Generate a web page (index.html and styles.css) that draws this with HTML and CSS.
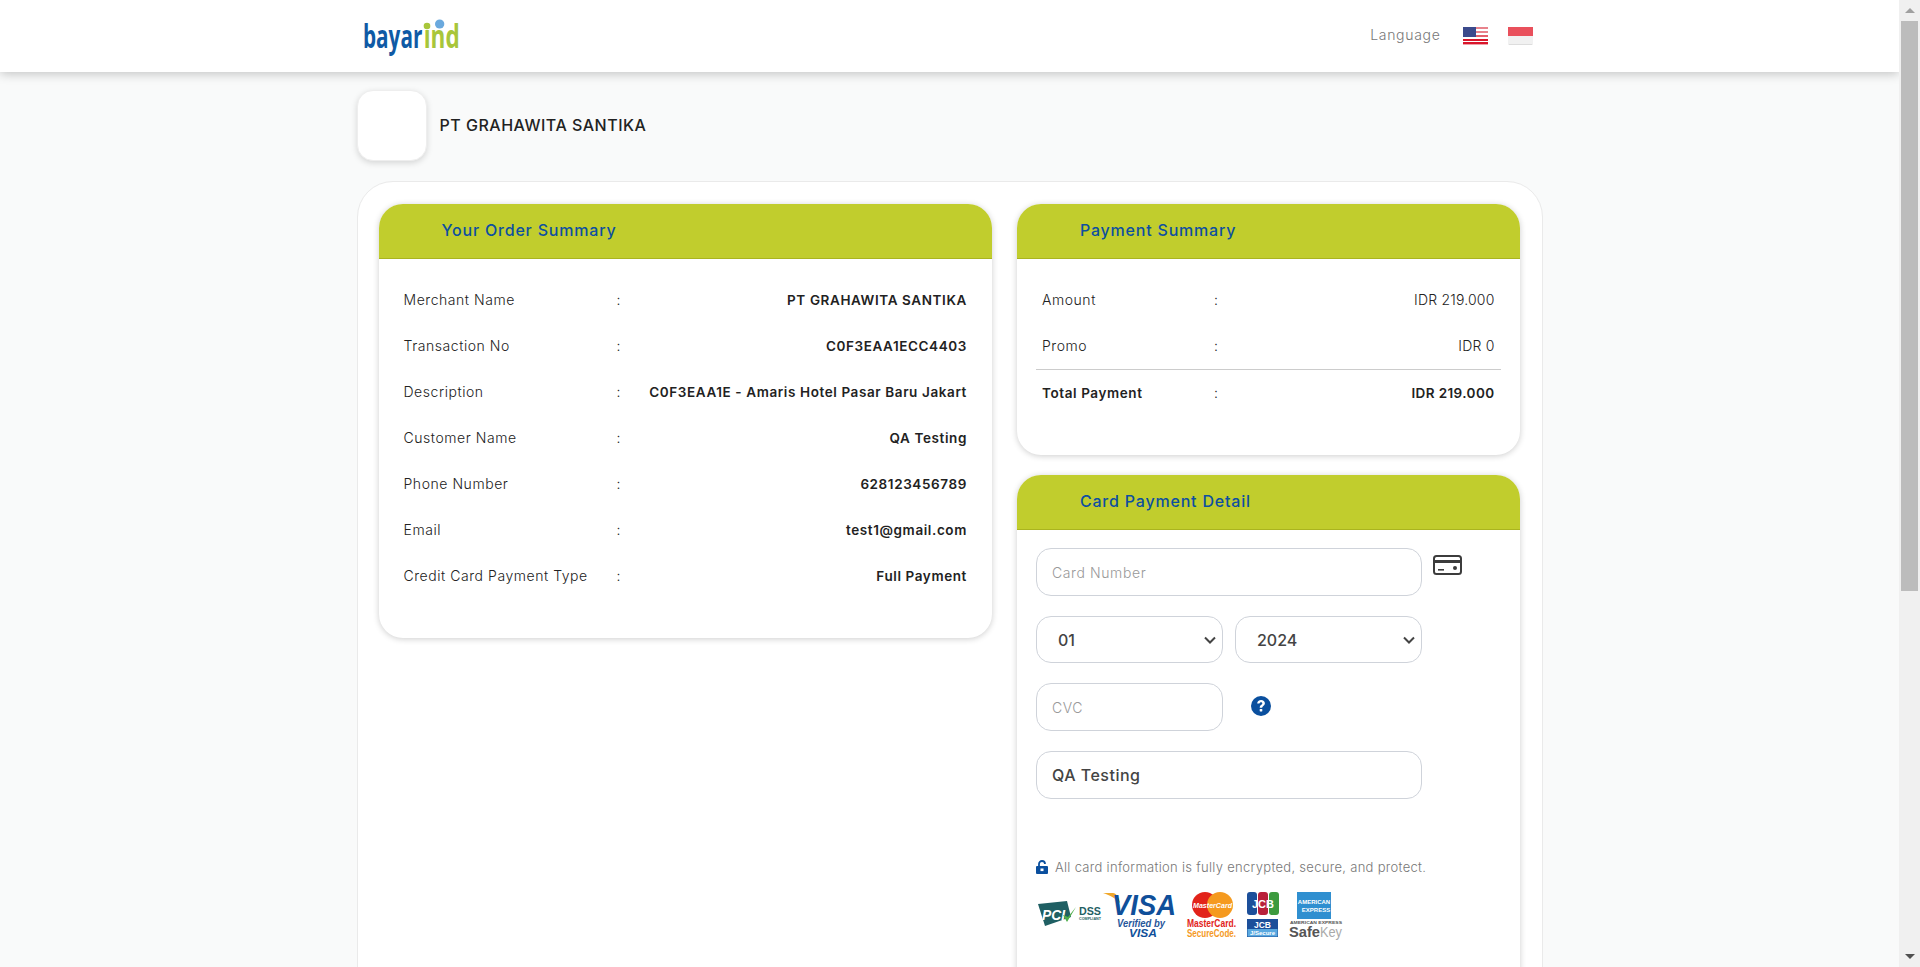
FILE: index.html
```html
<!doctype html>
<html>
<head>
<meta charset="utf-8">
<title>Bayarind Payment</title>
<link rel="stylesheet" href="styles.css">
</head>

<body>
<div class="page">
    <div class="topbar">
        <div class="wrap topbar-in">
            <svg class="logo" width="100" height="36" viewBox="0 0 150 36" preserveAspectRatio="none">
                <text x="0" y="29" class="logo-txt logo-blue" textLength="89" lengthAdjust="spacingAndGlyphs">bayar</text>
                <text x="91" y="29" class="logo-txt logo-green" textLength="54" lengthAdjust="spacingAndGlyphs">ind</text>
                <ellipse cx="96" cy="7" rx="5" ry="3.2" fill="#a8c63a"/>
                <ellipse cx="115" cy="5" rx="7" ry="4.6" fill="#6aa9de"/>
            </svg>
            <div class="lang">
                <span class="lang-label">Language</span>
                <svg class="flag" width="25" height="18" viewBox="0 0 25 18">
                    <rect width="25" height="18" fill="#fff"/>
                    <rect y="0" width="25" height="2" fill="#e8838c"/>
                    <rect y="4" width="25" height="2" fill="#e8838c"/>
                    <rect y="8" width="25" height="2" fill="#e4606b"/>
                    <rect y="12" width="25" height="2" fill="#d9152a"/>
                    <rect y="15" width="25" height="2.4" fill="#d9152a"/>
                    <rect width="13" height="10" fill="#3b4a8c"/>
                </svg>
                <svg class="flag" width="25" height="18" viewBox="0 0 25 18">
                    <rect width="25" height="18" fill="#f1f1f1"/>
                    <rect x="1" y="17" width="23" height="1" fill="#ddd"/>
                    <rect width="25" height="9" fill="#e9505c"/>
                </svg>
            </div>
        </div>
    </div>

    <div class="wrap">
        <div class="merchant">
            <div class="merchant-logo"></div>
            <div class="merchant-name">PT GRAHAWITA SANTIKA</div>
        </div>

        <div class="main">
            <div class="col-left">
                <div class="card">
                    <div class="card-head">Your Order Summary</div>
                    <div class="card-body">
                        <div class="row order"><span class="lbl">Merchant Name</span><span class="sep">:</span><span class="val b">PT GRAHAWITA SANTIKA</span></div>
                        <div class="row order"><span class="lbl">Transaction No</span><span class="sep">:</span><span class="val b">C0F3EAA1ECC4403</span></div>
                        <div class="row order"><span class="lbl">Description</span><span class="sep">:</span><span class="val b">C0F3EAA1E - Amaris Hotel Pasar Baru Jakart</span></div>
                        <div class="row order"><span class="lbl">Customer Name</span><span class="sep">:</span><span class="val b">QA Testing</span></div>
                        <div class="row order"><span class="lbl">Phone Number</span><span class="sep">:</span><span class="val b">628123456789</span></div>
                        <div class="row order"><span class="lbl">Email</span><span class="sep">:</span><span class="val b">test1@gmail.com</span></div>
                        <div class="row order"><span class="lbl">Credit Card Payment Type</span><span class="sep">:</span><span class="val b">Full Payment</span></div>
                    </div>
                </div>
            </div>

            <div class="col-right">
                <div class="card">
                    <div class="card-head">Payment Summary</div>
                    <div class="card-body">
                        <div class="row pay"><span class="lbl">Amount</span><span class="sep">:</span><span class="val">IDR 219.000</span></div>
                        <div class="row pay"><span class="lbl">Promo</span><span class="sep">:</span><span class="val">IDR 0</span></div>
                        <div class="row pay total"><span class="lbl b">Total Payment</span><span class="sep">:</span><span class="val b">IDR 219.000</span></div>
                    </div>
                </div>

                <div class="card">
                    <div class="card-head">Card Payment Detail</div>
                    <div class="card-form">
                        <div class="form-row">
                            <input class="field wide" type="text" placeholder="Card Number">
                            <svg class="card-ico" width="29" height="20" viewBox="0 0 29 20">
                                <rect x="1" y="1" width="27" height="18" rx="2.5" fill="none" stroke="#3c3c3c" stroke-width="2"/>
                                <rect x="1" y="5" width="27" height="3" fill="#3c3c3c"/>
                                <rect x="5" y="14" width="6" height="1.6" fill="#3c3c3c"/>
                                <circle cx="22" cy="13" r="2" fill="#3c3c3c"/>
                            </svg>
                        </div>
                        <div class="form-row pair">
                            <select class="field half sel"><option>01</option></select>
                            <select class="field half sel"><option>2024</option></select>
                        </div>
                        <div class="form-row">
                            <input class="field half" type="text" placeholder="CVC">
                            <svg class="help-ico" width="20" height="20" viewBox="0 0 20 20">
                                <circle cx="10" cy="10" r="10" fill="#0a4f9e"/>
                                <path d="M6.2 7.5c0-2.2 1.7-3.5 3.9-3.5s3.8 1.3 3.8 3.2c0 2.6-2.7 2.6-2.7 4.6H8.7c0-3.1 2.6-3 2.6-4.4 0-.7-.5-1.2-1.3-1.2-.9 0-1.4.6-1.5 1.4z" fill="#fff"/>
                                <rect x="8.7" y="12.9" width="2.6" height="2.6" rx=".4" fill="#fff"/>
                            </svg>
                        </div>
                        <div class="form-row">
                            <input class="field wide filled" type="text" value="QA Testing">
                        </div>

                        <div class="secure">
                            <svg width="12" height="14" viewBox="0 0 12 14">
                                <path d="M3 6V4a3 3 0 0 1 6 0" fill="none" stroke="#0a4f9e" stroke-width="1.8"/>
                                <rect y="6" width="12" height="8" rx="1" fill="#0a4f9e"/>
                                <rect x="4.5" y="8.5" width="3" height="2.6" fill="#fff"/>
                            </svg>
                            <span>All card information is fully encrypted, secure, and protect.</span>
                        </div>

                        <div class="badges">
                            <svg width="64" height="46" viewBox="0 0 64 46">
                                <path d="M0 12l29-3 4 16-26 9z" fill="#1f5f63"/>
                                <text x="4" y="28" class="b-pci" textLength="23" lengthAdjust="spacingAndGlyphs">PCI</text>
                                <path d="M25 23l4 7 9-15-8 10z" fill="#4fae4a"/>
                                <text x="41" y="23" class="b-dss" textLength="22" lengthAdjust="spacingAndGlyphs">DSS</text>
                                <text x="41" y="28" class="b-comp" textLength="22" lengthAdjust="spacingAndGlyphs">COMPLIANT</text>
                            </svg>
                            <svg width="74" height="50" viewBox="0 0 74 50">
                                <path d="M0 1h10c3 0 6 5 7 10C13 6 6 3 0 1z" fill="#f0a72a"/>
                                <text x="9" y="23" class="b-visa" textLength="64" lengthAdjust="spacingAndGlyphs">VISA</text>
                                <text x="14" y="34.5" class="b-ver" textLength="48" lengthAdjust="spacingAndGlyphs">Verified by</text>
                                <text x="26" y="44.5" class="b-visa2" textLength="28" lengthAdjust="spacingAndGlyphs">VISA</text>
                            </svg>
                            <svg class="badge-mc" width="50" height="48" viewBox="0 0 50 48">
                                <circle cx="18" cy="13" r="13" fill="#e2231a"/>
                                <circle cx="33" cy="13" r="13" fill="#f59a1f"/>
                                <text x="6" y="15.5" class="b-mc" textLength="39" lengthAdjust="spacingAndGlyphs">MasterCard</text>
                                <text x="0" y="35" class="b-mc1" textLength="49" lengthAdjust="spacingAndGlyphs">MasterCard.</text>
                                <text x="0" y="45" class="b-mc2" textLength="49" lengthAdjust="spacingAndGlyphs">SecureCode.</text>
                            </svg>
                            <svg width="32" height="48" viewBox="0 0 32 48">
                                <rect x="0" y="0" width="10" height="23" rx="3" fill="#1c4f9a"/>
                                <rect x="11" y="0" width="10" height="23" rx="3" fill="#b8213a"/>
                                <rect x="22" y="0" width="10" height="23" rx="3" fill="#3d9a3f"/>
                                <text x="16" y="16" class="b-jcb" text-anchor="middle">JCB</text>
                                <rect x="0" y="27" width="31" height="18" fill="#1c4f9a"/>
                                <rect x="0.5" y="37" width="30" height="7.5" fill="#5aa9e0"/>
                                <text x="15.5" y="35.5" class="b-jcb2" text-anchor="middle">JCB</text>
                                <text x="15.5" y="43" class="b-jcb3" text-anchor="middle">J/Secure</text>
                            </svg>
                            <svg width="54" height="48" viewBox="0 0 54 48">
                                <rect x="8" y="0" width="34" height="27" fill="#2f8fd0"/>
                                <text x="25" y="12" class="b-amex" text-anchor="middle">AMERICAN</text>
                                <text x="27" y="20" class="b-amex" text-anchor="middle">EXPRESS</text>
                                <text x="1" y="32" class="b-amex2" textLength="52" lengthAdjust="spacingAndGlyphs">AMERICAN EXPRESS</text>
                                <text x="0" y="44.5" class="b-safe" textLength="31" lengthAdjust="spacingAndGlyphs">Safe</text>
                                <text x="31" y="44.5" class="b-key" textLength="22" lengthAdjust="spacingAndGlyphs">Key</text>
                            </svg>
                        </div>
                    </div>
                </div>
            </div>
        </div>
    </div>
</div>

<div class="scrollbar">
    <div class="sb-btn"><span class="sb-up"></span></div>
    <div class="sb-thumb"></div>
    <div class="sb-btn"><span class="sb-down"></span></div>
</div>
</body>
</html>
```

FILE: styles.css
```css
html,body{margin:0;padding:0;height:967px;overflow:hidden;}
body{display:flex;background:#f9fafa;color:#333;font:14px/20px Inter,"Open Sans",sans-serif;}
svg{overflow:visible;}
.page{flex:1;height:967px;overflow:hidden;min-width:0;}
.wrap{width:1186px;margin:0 auto;}

/* top bar */
.topbar{height:72px;background:#fff;box-shadow:0 2px 10px rgba(0,0,0,.22);}
.topbar-in{display:flex;align-items:center;justify-content:space-between;height:72px;}
.logo{margin:1px 0 0 6px;}
.logo-txt{font:700 32px "Open Sans",sans-serif;}
.logo-blue{fill:#0f5aa5;}
.logo-green{fill:#a8c63a;}
.lang{display:flex;align-items:center;margin:0 10px 0 0;}
.lang-label{color:#777;font-size:14px;font-weight:300;letter-spacing:.7px;margin-right:22px;position:relative;top:-1px;}
.flag{margin-left:20px;filter:blur(.3px);}
.lang-label + .flag{margin-left:0;}

/* merchant */
.merchant{display:flex;align-items:center;margin-top:18px;}
.merchant-logo{width:70px;height:71px;background:#fff;border-radius:16px;border:1px solid #eee;box-sizing:border-box;box-shadow:0 2px 6px rgba(0,0,0,.15);}
.merchant-name{margin:0 0 2px 13px;font-size:16px;font-weight:500;letter-spacing:.5px;color:#222;}

.main{display:flex;gap:25px;align-items:flex-start;margin-top:20px;padding:22px 22px 60px 21px;min-height:1200px;background:#fff;border:1px solid #eaeaea;border-radius:36px;box-sizing:border-box;}
.col-left{width:614px;}
.col-right{width:503px;display:flex;flex-direction:column;gap:20px;}

/* cards */
.card{background:#fff;border-radius:24px;box-shadow:0 1px 6px rgba(0,0,0,.2);overflow:hidden;}
.card-head{height:55px;line-height:52px;box-sizing:border-box;padding-left:63px;background:#c1cd2d;border-bottom:1px solid #aab41f;color:#0d4fa0;font-size:16px;font-weight:500;letter-spacing:.8px;}
.card-body{padding:18px 19px 39px;}
.row{display:flex;align-items:center;height:46px;padding:0 6px;font-weight:300;color:#222;letter-spacing:.55px;}
.row .lbl{flex:none;}
.row.order .lbl{width:213px;}
.row.pay .lbl{width:172px;}
.row .sep{flex:none;}
.row .val{flex:1;text-align:right;}
.row.pay .val{letter-spacing:.2px;}
.row .b{font-weight:600;color:#222;font-size:13.5px;letter-spacing:.6px;}
.row.pay .val.b{letter-spacing:.4px;}
.row.total{border-top:1px solid #ccc;}

/* form */
.card-form{padding:18px 19px 300px;}
.form-row{display:flex;align-items:flex-start;margin-bottom:20px;}
.form-row.pair{gap:12px;}
.field{height:48px;box-sizing:border-box;border:1px solid #cfd3da;border-radius:15px;background:#fff;padding:0 15px;font:300 14px Inter,sans-serif;letter-spacing:.6px;color:#444;outline:none;}
.field::placeholder{color:#999;}
.wide{width:386px;}
.half{width:187px;}
.filled{font-size:16px;font-weight:500;letter-spacing:.5px;}
.sel{height:47px;font-size:16px;font-weight:500;letter-spacing:0;padding-left:21px;appearance:none;background:#fff url("data:image/svg+xml,%3Csvg xmlns='http://www.w3.org/2000/svg' width='12' height='8'%3E%3Cpath d='M1 1.5l5 5 5-5' fill='none' stroke='%23444' stroke-width='2'/%3E%3C/svg%3E") no-repeat right 6px center;}
.card-ico{margin:7px 0 0 11px;}
.help-ico{margin:13px 0 0 28px;}
.secure{display:flex;align-items:center;gap:7px;margin-top:58px;color:#777;font-size:13px;font-weight:300;letter-spacing:.3px;}
.badges{display:flex;align-items:flex-start;margin:15px 0 0 2px;}
.badges svg{margin-right:10px;flex:none;}
.badges svg:first-child{margin-right:1px;}

/* card brand marks */
.badges text{font-family:"Liberation Sans",sans-serif;}
.b-pci{font-size:15px;font-weight:700;font-style:italic;fill:#fff;}
.b-dss{font-size:10px;font-weight:700;fill:#1f5f63;}
.b-comp{font-size:3.5px;font-weight:700;fill:#1f5f63;}
.b-visa{font-size:29px;font-weight:700;font-style:italic;fill:#0f4f9a;}
.b-ver{font-size:10.5px;font-weight:700;font-style:italic;fill:#26569b;}
.b-visa2{font-size:11.5px;font-weight:700;font-style:italic;fill:#0f4f9a;}
.b-mc{font-size:7.5px;font-weight:700;font-style:italic;fill:#fff;}
.b-mc1{font-size:10px;font-weight:700;fill:#e2231a;}
.b-mc2{font-size:10px;font-weight:700;fill:#f59a1f;}
.b-jcb{font-size:11px;font-weight:700;fill:#fff;}
.b-jcb2{font-size:8.5px;font-weight:700;fill:#fff;}
.b-jcb3{font-size:6px;font-weight:700;fill:#fff;}
.b-amex{font-size:6px;font-weight:700;fill:#fff;}
.b-amex2{font-size:4px;font-weight:700;fill:#555;}
.b-safe{font-size:15px;fill:#555;font-weight:700;}
.b-key{font-size:15px;fill:#aaa;}

/* scrollbar */
.scrollbar{flex:none;width:21px;height:967px;box-sizing:border-box;padding:0 2px;background:#f0f0f0;display:flex;flex-direction:column;align-items:stretch;}
.sb-btn{height:21px;display:flex;align-items:center;justify-content:center;}
.sb-thumb{height:570px;background:#bcbcbc;margin-bottom:auto;}
.sb-up{width:0;height:0;border-left:5px solid transparent;border-right:5px solid transparent;border-bottom:5px solid #a0a0a0;}
.sb-down{width:0;height:0;border-left:5px solid transparent;border-right:5px solid transparent;border-top:5px solid #505050;}
```
